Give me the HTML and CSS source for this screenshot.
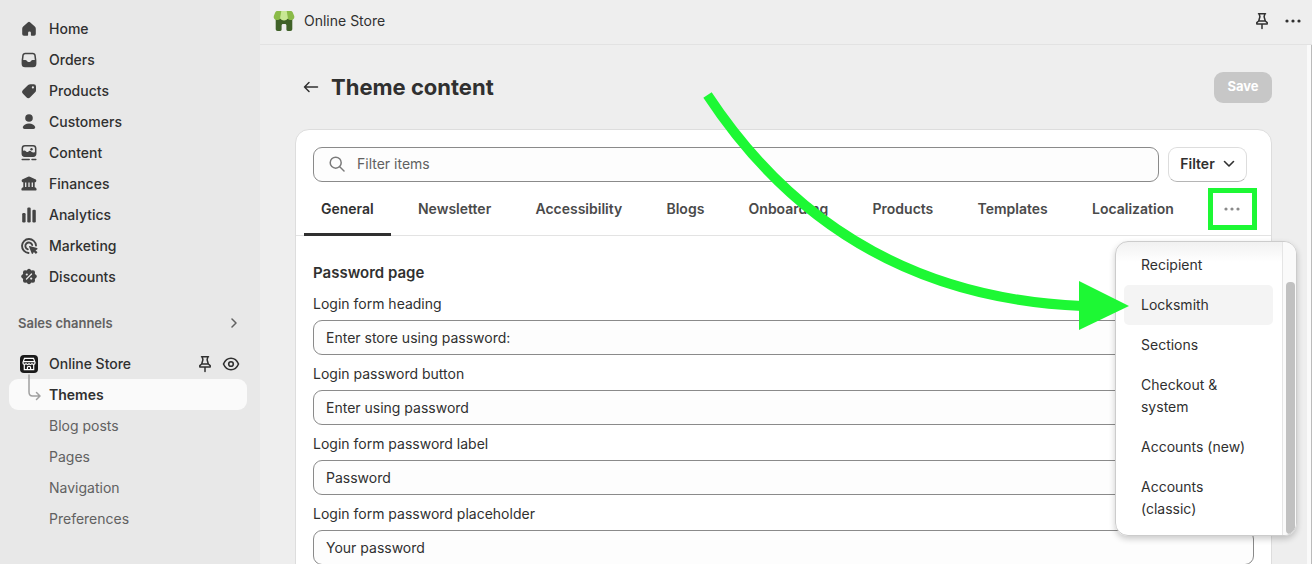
FILE: index.html
```html
<!DOCTYPE html>
<html lang="en">
<head>
<meta charset="utf-8">
<title>Theme content</title>
<link rel="stylesheet" href="styles.css">
</head>
<body>
<svg width="0" height="0" class="defs" aria-hidden="true">
  <symbol id="pin" viewBox="0 0 16 18"><path d="M4.500 1.700h7M5.200 1.900l.7 2.900-1.200 4.200h6.600L10.100 4.800l.7-2.900M4.700 9 2.800 10.600v1.500h10.400v-1.500L11.300 9M8 12.500V16.600" fill="none" stroke="currentColor" stroke-width="1.500" stroke-linecap="round" stroke-linejoin="round"/></symbol>
  <symbol id="dots" viewBox="0 0 18 6"><g fill="currentColor"><circle cx="3" cy="3" r="1.600"/><circle cx="9" cy="3" r="1.600"/><circle cx="15" cy="3" r="1.600"/></g></symbol>
</svg>
<div class="app">
  <nav class="sidebar">
    <ul class="nav">
      <li><a href="#"><svg class="icon" viewBox="0 0 18 18"><path fill="currentColor" d="M8 2.300a1.500 1.500 0 0 1 2 0l4.800 4.300c.7.700 1 1.300 1 2.200v5.300a1.700 1.700 0 0 1-1.700 1.700h-2.500a.7.7 0 0 1-.7-.7v-2.300a1.400 1.400 0 0 0-2.800 0v2.300a.7.7 0 0 1-.7.700H3.900a1.700 1.700 0 0 1-1.700-1.700V8.800c0-.9.300-1.500 1-2.200z"/></svg>Home</a></li>
      <li><a href="#"><svg class="icon" viewBox="0 0 18 18"><path fill="currentColor" fill-rule="evenodd" d="M5.300 1.700h7.400c1.900 0 2.800 1 3.100 2.800l.6 4.700v3.600a3.500 3.500 0 0 1-3.500 3.500H5.100a3.500 3.500 0 0 1-3.500-3.500V9.200l.6-4.700c.3-1.800 1.200-2.800 3.100-2.800zm.2 1.500c-1 0-1.600.5-1.800 1.500L3.200 8.900h2.200c.7 0 1.100.3 1.400.8.900 1.700 3.500 1.700 4.400 0 .3-.5.700-.8 1.400-.8h2.200l-.5-4.200c-.2-1-.8-1.500-1.800-1.500z"/></svg>Orders</a></li>
      <li><a href="#"><svg class="icon" viewBox="0 0 18 18"><path fill="currentColor" fill-rule="evenodd" d="M10.500 2.200h3.200a2.300 2.300 0 0 1 2.300 2.300v3.700c0 .8-.3 1.500-.9 2.100l-4.900 4.900a2.700 2.700 0 0 1-3.800 0l-3.400-3.400a2.700 2.700 0 0 1 0-3.800l5.100-4.900c.7-.6 1.500-.9 2.400-.9zm2.400 2.100a1.100 1.100 0 1 0 0 2.200 1.100 1.100 0 0 0 0-2.200z"/></svg>Products</a></li>
      <li><a href="#"><svg class="icon" viewBox="0 0 18 18"><g fill="currentColor"><circle cx="9" cy="5" r="3.800"/><path d="M9 10.400c3 0 5.300 1.300 6.100 3.300.4 1.200-.4 2.300-1.600 2.300h-9c-1.200 0-2-1.100-1.600-2.300.8-2 3.100-3.300 6.100-3.300z"/></g></svg>Customers</a></li>
      <li><a href="#"><svg class="icon" viewBox="0 0 18 18"><rect x="2.300" y="1.800" width="13.400" height="10.400" rx="2.600" fill="none" stroke="currentColor" stroke-width="1.500"/><path fill="currentColor" d="M2 7.500c1.500-1.500 3-1.400 4.200 0 .8.900 1.500.6 2.300-.1 1.100-1 2-.6 2.900.3s2.600 1 4.300.4v1.500c0 1.700-.9 2.600-2.600 2.600H4.600c-1.700 0-2.600-.9-2.600-2.600z"/><circle cx="11.500" cy="5.300" r="1.200" fill="currentColor"/><path d="M2.200 15.500h7M12 15.500h3.800" stroke="currentColor" stroke-width="1.500" stroke-linecap="round"/></svg>Content</a></li>
      <li><a href="#"><svg class="icon" viewBox="0 0 18 18"><path fill="currentColor" d="M8.100 1.700a2 2 0 0 1 1.800 0l5.400 2.600c1.700.8 1.200 3-.6 3v4.900c1.200.2 1.900 1 1.900 2.200 0 .7-.4 1.100-1 1.100H2.400c-.6 0-1-.4-1-1.100 0-1.200.7-2 1.900-2.200V7.300c-1.800 0-2.300-2.200-.6-3z"/><path d="M5.700 7.600v4.300M9 7.600v4.300M12.300 7.600v4.300" stroke="#e8e8e8" stroke-width="1.300"/></svg>Finances</a></li>
      <li><a href="#"><svg class="icon" viewBox="0 0 18 18"><g fill="currentColor"><rect x="2.200" y="7" width="3.400" height="9.500" rx="1.200"/><rect x="7.300" y="1.500" width="3.400" height="15" rx="1.200"/><rect x="12.400" y="3.800" width="3.400" height="12.700" rx="1.200"/></g></svg>Analytics</a></li>
      <li><a href="#"><svg class="icon" viewBox="0 0 18 18"><g fill="none" stroke="currentColor" stroke-width="1.900" stroke-linecap="round"><path d="M16 8.500A7 7 0 1 0 8.500 16"/><path d="M12.200 8A3.500 3.500 0 1 0 7.800 12.300"/></g><path fill="currentColor" d="M9.600 8.900 17 11c.7.200.7 1.100.1 1.400l-1.600.8 2 2-1.600 1.700-2-2-.9 1.600c-.3.600-1.100.5-1.300-.1L9 9.600c-.1-.4.200-.8.600-.7z"/></svg>Marketing</a></li>
      <li><a href="#"><svg class="icon" viewBox="0 0 18 18"><path fill="currentColor" d="M7.500 1.400a2.100 2.100 0 0 1 3 0l.9 1 1.400-.1a2.100 2.100 0 0 1 2.200 2.200l-.1 1.400 1 .9a2.100 2.100 0 0 1 0 3.200l-1 .9.100 1.600a2.100 2.100 0 0 1-2.200 2.200l-1.400-.1-.9 1a2.100 2.100 0 0 1-3 0l-.9-1-1.400.1A2.100 2.100 0 0 1 3 12.500l.1-1.600-1-.9a2.100 2.100 0 0 1 0-3.200l1-.9L3 4.500a2.100 2.100 0 0 1 2.200-2.200l1.400.1z"/><path d="m6.500 11 5-5" stroke="#e8e8e8" stroke-width="1.300" stroke-linecap="round"/><circle cx="6.800" cy="6.500" r="1.100" fill="#e8e8e8"/><circle cx="11.200" cy="10.600" r="1.100" fill="#e8e8e8"/></svg>Discounts</a></li>
    </ul>
    <button class="section" type="button">Sales channels<svg width="10" height="10" viewBox="0 0 10 10"><path d="m3 1 4 4-4 4" fill="none" stroke="currentColor" stroke-width="1.500" stroke-linecap="round" stroke-linejoin="round"/></svg></button>
    <ul class="nav channels">
      <li class="store"><a href="#"><svg class="icon" viewBox="0 0 18 18"><rect width="18" height="18" rx="4" fill="#1a1a1a"/><path d="M4.500 3.300h9l1.500 4v.8c0 1.400-1.800 1.800-3 .6-1.200 1.200-2.100 1.200-3 0-.9 1.200-1.800 1.200-3 0-1.200 1.200-3 .8-3-.6v-.8zM3.200 6.700h11.600M4.300 9.400v5.200h9.400V9.400M7.400 14.600v-2.200c0-.6.500-1 1.600-1s1.600.4 1.600 1v2.200" fill="none" stroke="#fff" stroke-width="1.200"/></svg>Online Store</a>
        <button type="button" aria-label="Unpin"><svg width="16" height="18"><use href="#pin"/></svg></button>
        <button type="button" aria-label="View store"><svg width="18" height="16" viewBox="0 0 18 16"><path d="M1.500 8C3 4.500 5.700 2.300 9 2.300S15 4.500 16.500 8C15 11.500 12.300 13.700 9 13.700S3 11.500 1.500 8z" fill="none" stroke="currentColor" stroke-width="1.600"/><circle cx="9" cy="8" r="2.300" fill="none" stroke="currentColor" stroke-width="1.600"/></svg></button></li>
      <li><a class="active" href="#"><svg class="branch" viewBox="0 0 18 31"><path d="M9-4v17c0 2.500 1 4 3.500 4h7M16.500 13.500l3.500 3.500-3.500 3.500" fill="none" stroke="#a0a0a0" stroke-width="1.500" stroke-linecap="round" stroke-linejoin="round"/></svg>Themes</a></li>
      <li><a class="sub" href="#">Blog posts</a></li>
      <li><a class="sub" href="#">Pages</a></li>
      <li><a class="sub" href="#">Navigation</a></li>
      <li><a class="sub" href="#">Preferences</a></li>
    </ul>
  </nav>
  <div class="main">
    <header class="topbar">
      <svg width="22" height="22" viewBox="0 0 22 22"><path fill="#3f6128" d="M2.700 9h16.600v10c0 1.300-.7 2-2 2h-2.500c-1 0-1.400-.5-1.400-1.400v-4c0-1.200-.5-1.700-1.500-1.700h-1.800c-1 0-1.500.5-1.500 1.700v4c0 .9-.4 1.400-1.400 1.400H4.700c-1.300 0-2-.7-2-2z"/><path fill="#8aba48" d="M4.500 1h13c1.200 0 2 .6 2.400 1.700L21.200 6c.6 2-.8 4.100-3.100 4.100-1.500 0-2.600-.6-3.500-1.700-2 2.200-5.200 2.200-7.200 0-.9 1.100-2 1.700-3.500 1.700C1.600 10.100.2 8 .8 6l1.300-3.300C2.500 1.600 3.300 1 4.500 1z"/><path fill="#c8e794" d="M8.300 1h5.400l1.100 6.500a3.900 3.900 0 0 1-7.600 0z"/></svg>
      <span class="app-name">Online Store</span>
      <button type="button" aria-label="Pin"><svg width="16" height="18"><use href="#pin"/></svg></button>
      <button type="button" aria-label="More actions"><svg width="18" height="6"><use href="#dots"/></svg></button>
    </header>
    <main class="page">
      <div class="page-head">
        <button class="back" type="button" aria-label="Back"><svg width="16" height="12" viewBox="0 0 16 12"><path d="M14.500 6H1.500M6 1.500 1.500 6 6 10.500" fill="none" stroke="currentColor" stroke-width="1.500" stroke-linecap="round" stroke-linejoin="round"/></svg></button>
        <h1>Theme content</h1>
        <button class="save" type="button" disabled>Save</button>
      </div>
      <section class="card">
        <div class="filters">
          <div class="search">
            <svg width="16" height="16" viewBox="0 0 16 16"><path d="m11 11 4 4" stroke="currentColor" stroke-width="1.500" stroke-linecap="round"/><circle cx="6.700" cy="6.700" r="5.500" fill="none" stroke="currentColor" stroke-width="1.500"/></svg>
            <input type="text" placeholder="Filter items" aria-label="Filter items">
          </div>
          <button class="filter" type="button">Filter<svg width="12" height="8" viewBox="0 0 12 8"><path d="m1.500 1.500 4.500 4.500 4.500-4.500" fill="none" stroke="currentColor" stroke-width="1.600" stroke-linecap="round" stroke-linejoin="round"/></svg></button>
        </div>
        <div class="tabs" role="tablist">
          <button type="button" role="tab" aria-selected="true">General</button>
          <button type="button" role="tab">Newsletter</button>
          <button type="button" role="tab">Accessibility</button>
          <button type="button" role="tab">Blogs</button>
          <button type="button" role="tab">Onboarding</button>
          <button type="button" role="tab">Products</button>
          <button type="button" role="tab">Templates</button>
          <button type="button" role="tab">Localization</button>
          <div class="more">
            <button class="more-button" type="button" aria-label="More tabs"><svg width="18" height="6"><use href="#dots"/></svg></button>
            <div class="menu">
              <ul>
                <li><button type="button">Recipient</button></li>
                <li><button class="hover" type="button">Locksmith</button></li>
                <li><button type="button">Sections</button></li>
                <li><button type="button">Checkout &amp; system</button></li>
                <li><button type="button">Accounts (new)</button></li>
                <li><button type="button">Accounts (classic)</button></li>
              </ul>
              <div class="track"><div class="thumb"></div></div>
            </div>
          </div>
        </div>
        <form class="form">
          <h2>Password page</h2>
          <label for="f1">Login form heading</label>
          <input id="f1" type="text" value="Enter store using password:">
          <label for="f2">Login password button</label>
          <input id="f2" type="text" value="Enter using password">
          <label for="f3">Login form password label</label>
          <input id="f3" type="text" value="Password">
          <label for="f4">Login form password placeholder</label>
          <input id="f4" type="text" value="Your password">
        </form>
      </section>
    </main>
    <svg class="arrow" width="612" height="340" viewBox="700 0 612 340" aria-hidden="true"><path d="M707.500 95Q840 296 1082 306" fill="none" stroke="#1df834" stroke-width="10"/><path d="M1079 281v49l50-24z" fill="#1df834"/></svg>
  </div>
</div>
</body>
</html>
```
FILE: styles.css
```css
* { box-sizing: border-box; }

body {
  margin: 0;
  background: #eee;
  color: #303030;
  font: 15px/22px Inter, "Liberation Sans", sans-serif;
}

button, input { font: inherit; color: inherit; }

button {
  padding: 0;
  border: 0;
  background: none;
}

ul { margin: 0; padding: 0; list-style: none; }
svg { display: block; flex: none; }
.defs { position: absolute; }

.app { display: flex; height: 100vh; overflow: hidden; }

.sidebar {
  flex: none;
  width: 260px;
  padding: 13px 13px 0 9px;
  background: #e8e8e8;
}

.nav li { display: flex; }

.nav a {
  flex: 1;
  display: flex;
  align-items: center;
  gap: 11px;
  height: 31px;
  padding-left: 11px;
  border-radius: 9px;
  color: #303030;
  font-size: 14px;
  font-weight: 500;
  text-decoration: none;
}

.icon { width: 18px; height: 18px; color: #444; }

.section {
  display: flex;
  align-items: center;
  justify-content: space-between;
  width: 100%;
  height: 30px;
  margin-top: 16px;
  padding: 0 8px 0 9px;
  color: #616161;
  font-size: 13px;
  font-weight: 600;
}

.channels { margin-top: 10px; }
.store { align-items: center; gap: 9px; padding-right: 7px; }
.branch { width: 18px; height: 31px; overflow: visible; }
.nav .active { background: #fafafa; font-weight: 600; }
.nav .sub { padding-left: 40px; color: #616161; font-weight: 400; }

.main {
  position: relative;
  flex: 1;
  display: flex;
  flex-direction: column;
  min-width: 0;
}

.topbar {
  flex: none;
  display: flex;
  align-items: center;
  gap: 14px;
  height: 45px;
  padding: 0 10px 2px 13px;
  border-bottom: 1px solid #e2e2e2;
}

.topbar > svg { margin-right: -5px; }
.app-name { flex: 1; font-size: 14px; }

.page {
  flex: 1;
  min-height: 0;
  overflow: hidden;
  margin-right: 1px;
  padding: 25px 35px 0;
  border-right: 4px solid #fafafa;
  box-shadow: 1px 0 #bbb;
}

.page-head {
  display: flex;
  align-items: center;
  gap: 12px;
  height: 34px;
  padding-left: 8px;
}

h1 { flex: 1; margin: 0; font-size: 22px; line-height: 30px; font-weight: 700; }

.save {
  width: 58px;
  height: 31px;
  padding-bottom: 2px;
  border-radius: 9px;
  background: #c7c7c7;
  color: #fff;
  font-size: 13px;
  font-weight: 700;
}

.card {
  margin-top: 25px;
  border: 1px solid #ddd;
  border-radius: 14px 14px 0 0;
  background: #fff;
}

.filters { display: flex; gap: 9px; padding: 17px 24px 0 17px; }

.search {
  flex: 1;
  display: flex;
  align-items: center;
  gap: 12px;
  height: 35px;
  padding: 0 15px 2px;
  border: 1px solid #8a8a8a;
  border-radius: 9px;
  background: #fdfdfd;
  color: #7a7a7a;
}

.search input {
  flex: 1;
  min-width: 0;
  padding: 0;
  border: 0;
  outline: 0;
  background: none;
  font-size: 14px;
}

.search input::placeholder { color: #616161; opacity: 1; }

.filter {
  display: flex;
  align-items: center;
  justify-content: center;
  gap: 8px;
  width: 79px;
  height: 35px;
  padding-bottom: 2px;
  border: 1px solid #ddd;
  border-bottom-color: #b5b5b5;
  border-radius: 9px;
  font-size: 14px;
  font-weight: 600;
}

.tabs {
  display: flex;
  justify-content: space-between;
  height: 54px;
  padding: 0 14px 0 8px;
  border-bottom: 1px solid #e3e3e3;
}

.tabs > button {
  height: 54px;
  padding: 2px 17px 0;
  border-bottom: 3px solid transparent;
  color: #4a4a4a;
  font-size: 14px;
  font-weight: 600;
}

.tabs > button[aria-selected] { border-color: #303030; color: #303030; border-radius: 2px 2px 0 0; }

.more { position: relative; margin: 6px 0 0 7px; }

.more-button {
  display: grid;
  place-items: center;
  width: 49px;
  height: 42px;
  border: 5px solid #1df834;
  color: #8a8a8a;
}

.menu {
  position: absolute;
  top: 53px;
  right: -40px;
  display: flex;
  width: 182px;
  height: 295px;
  overflow: hidden;
  border: 1px solid #ccc;
  border-radius: 13px;
  background: linear-gradient(#f1f1f1, #fff 20px);
  box-shadow: 0 3px 6px #0003;
}

.menu ul { flex: 1; padding: 3px 9px 0 8px; }

.menu li button {
  width: 100%;
  padding: 9px 12px 9px 17px;
  border-radius: 5px;
  font-size: 14px;
  text-align: left;
}

.menu .hover { background: #f4f4f4; }

.track {
  width: 14px;
  padding: 40px 1px 1px 3px;
  border-left: 1px solid #e5e5e5;
  background: #fafafa;
}

.thumb { height: 100%; border-radius: 4px; background: #c1c1c1; }

.form { display: flex; flex-direction: column; padding: 26px 17px 0; }

h2 { margin: 0 0 9px; font-size: 15px; line-height: 22px; font-weight: 600; }
.form label { font-size: 14px; }

.form input {
  height: 35px;
  margin: 5px 0 8px;
  padding: 0 12px;
  border: 1px solid #8a8a8a;
  border-radius: 9px;
  background: #fdfdfd;
  font-size: 14px;
}

.arrow { position: absolute; top: 0; right: 0; pointer-events: none; }
```
